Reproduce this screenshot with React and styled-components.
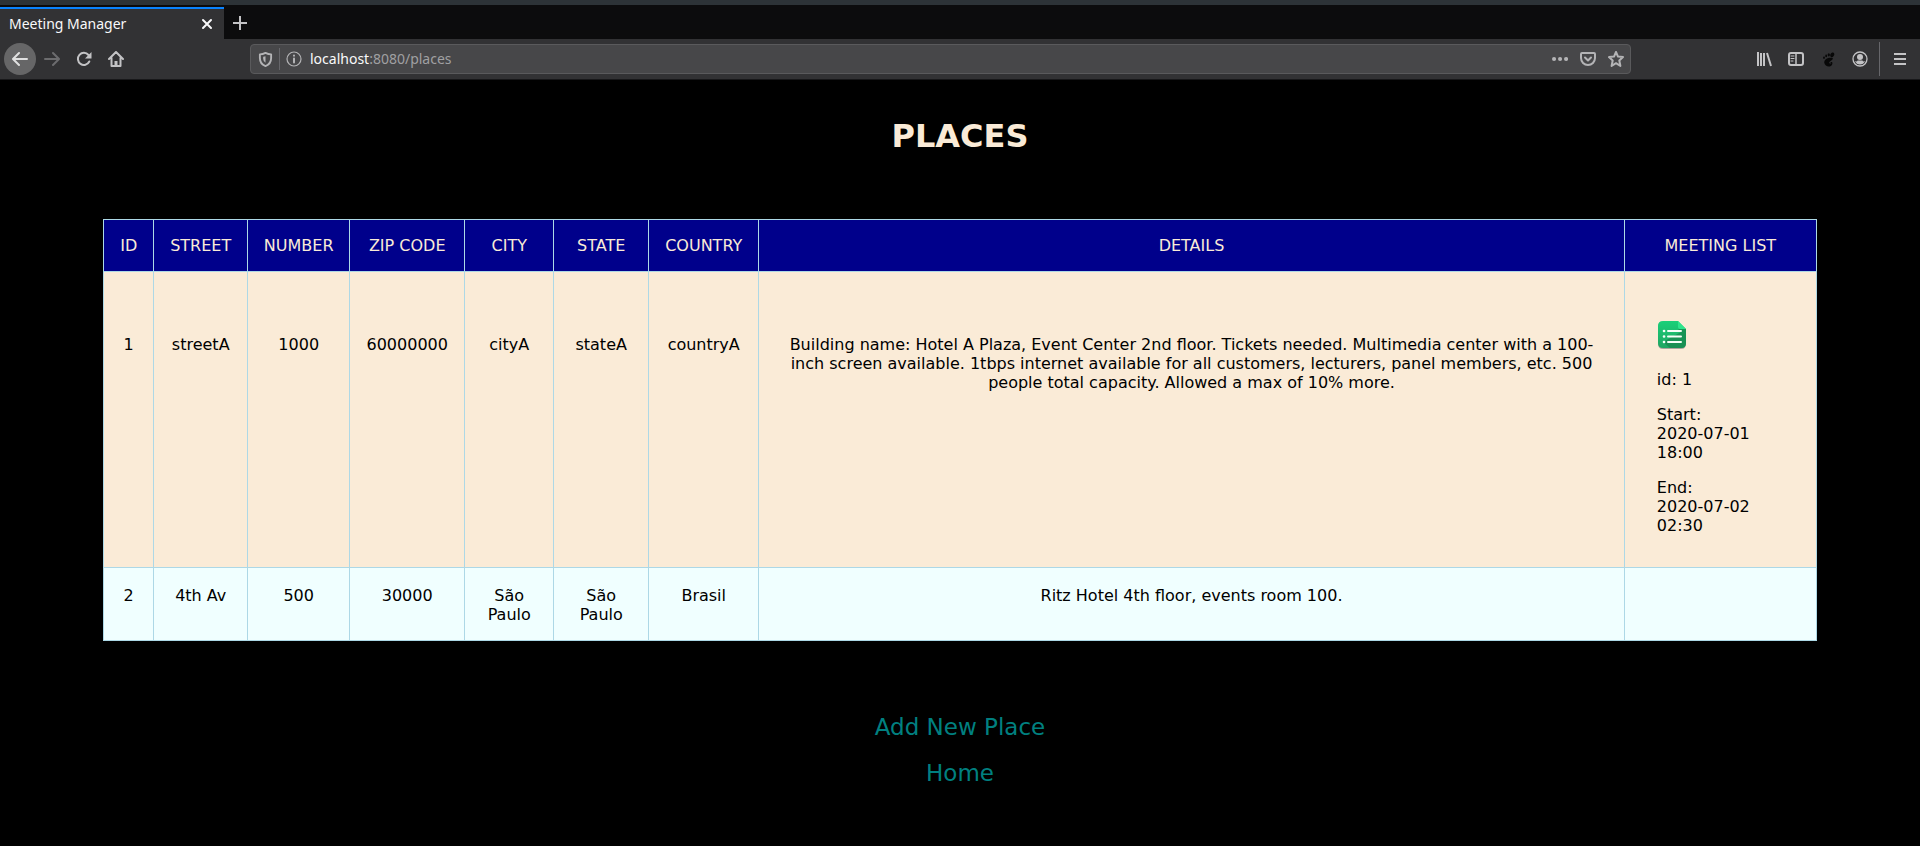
import React from "react";
import styled, { createGlobalStyle } from "styled-components";

const GlobalStyle = createGlobalStyle`
  * { box-sizing: border-box; }
  body { margin: 0; background: #000; font-family: "DejaVu Sans", sans-serif; font-size: 16px; }
`;

const Chrome = styled.header`
  background: #323234;
  border-bottom: 1px solid #18181a;
  font-family: "Noto Sans", sans-serif;
  color: #f9f9fa;
`;

const TabStrip = styled.div`
  display: flex;
  height: 39px;
  padding-top: 7px;
  background: linear-gradient(#2d3337 5px, #0c0c0d 5px);
`;

const Tab = styled.div`
  display: flex;
  align-items: center;
  justify-content: space-between;
  width: 224px;
  padding: 0 8px 0 9px;
  border-top: 2px solid #0a84ff;
  background: #323234;
  font-size: 14px;
  line-height: 20px;
`;

const IconButton = styled.button`
  display: flex;
  align-items: center;
  justify-content: center;
  width: 32px;
  height: 32px;
  padding: 0;
  border: 0;
  border-radius: ${(p) => (p.$round ? "50%" : "2px")};
  background: ${(p) => (p.$round ? "#666667" : "none")};
  color: ${(p) => p.$tone || "#c3c3c5"};
`;

const CloseButton = styled(IconButton)`
  width: 18px;
  height: 18px;
`;

const Toolbar = styled.div`
  display: flex;
  align-items: center;
  height: 40px;
  padding: 0 4px;
`;

const NavGroup = styled.div`
  display: flex;
  width: 246px;
  flex: none;
`;

const AddressBar = styled.div`
  display: flex;
  align-items: center;
  flex: 1;
  height: 30px;
  border: 1px solid #5a5a5c;
  border-radius: 4px;
  background: #474749;
`;

const SmallButton = styled(IconButton)`
  width: 28px;
  height: 28px;
  color: #b4b4b6;
`;

const Separator = styled.span`
  width: 1px;
  height: 22px;
  background: #66666a;
`;

const ToolSeparator = styled(Separator)`
  height: 34px;
  margin: 0 4px 0 3px;
`;

const Address = styled.label`
  display: grid;
  flex: 1;
  align-items: center;
  padding-left: 2px;
  font-size: 14px;
  line-height: 20px;
  color: #a0a0a2;

  & > * { grid-area: 1 / 1; }
  b { font-weight: 400; color: #f9f9fa; }
`;

const AddressInput = styled.input`
  width: 100%;
  padding: 0;
  border: 0;
  outline: 0;
  background: none;
  color: transparent;
  font: inherit;
`;

const ToolGroup = styled.div`
  display: flex;
  align-items: center;
  justify-content: flex-end;
  width: 285px;
  flex: none;
`;

const Page = styled.main`
  display: flex;
  flex-direction: column;
  align-items: center;
  padding: 37px 8px 48px;
`;

const Title = styled.h1`
  margin: 0 0 64px;
  color: antiquewhite;
  font-size: 32px;
  line-height: 38px;
`;

const Table = styled.table`
  width: 90%;
  table-layout: fixed;
  border-collapse: collapse;
  text-align: center;
  line-height: 19px;
`;

const Column = styled.col`
  width: ${(p) => (p.$width ? `${p.$width}px` : "auto")};
`;

const HeadCell = styled.th`
  padding: 16px 0;
  border: 1px solid lightblue;
  background: darkblue;
  color: antiquewhite;
  font-weight: 400;
`;

const Row = styled.tr`
  background: ${(p) => (p.$alternate ? "azure" : "antiquewhite")};
`;

const Cell = styled.td`
  padding: 18px ${(p) => (p.$wide ? 30 : 16)}px 16px;
  border: 1px solid lightblue;
  vertical-align: baseline;
`;

const MeetingCell = styled(Cell)`
  padding: 32px 32px 16px;
  text-align: left;
`;

const MeetingLine = styled.p`
  margin: 16px 0;
`;

const MeetingPart = styled.span`
  display: block;
  white-space: nowrap;
`;

const Links = styled.nav`
  display: flex;
  flex-direction: column;
  align-items: center;
  gap: 18px;
  margin-top: 72px;
`;

const PageLink = styled.a`
  color: teal;
  font-size: 23px;
  line-height: 28px;
  text-decoration: none;
`;

const Icon = ({ size = 16, children }) => (
  <svg width={size} height={size} viewBox="0 0 16 16" fill="none" stroke="currentColor" strokeWidth="2" strokeLinecap="round" strokeLinejoin="round" aria-hidden="true">
    {children}
  </svg>
);

const FormsIcon = () => (
  <svg width="30" height="30" viewBox="0 0 30 30" role="img" aria-label="Meeting">
    <defs>
      <linearGradient id="sheet" x2="0" y2="1">
        <stop stopColor="#1ad079" />
        <stop offset="1" stopColor="#1fa562" />
      </linearGradient>
    </defs>
    <path d="M6 2h15l8 8v14q0 5-5 5H6q-5 0-5-5V7q0-5 5-5Z" fill="#777" opacity=".6" />
    <path d="M6 1h15l8 8v14q0 5-5 5H6q-5 0-5-5V6q0-5 5-5Z" fill="url(#sheet)" />
    <path d="M21 9h8v14q0 5-5 5H13L6 22l18-10Z" fill="#168a50" opacity=".8" />
    <path d="M21 1l8 8h-6q-2 0-2-2Z" fill="#2ee58c" />
    <path d="M11 11h13M11 16.500h13M11 22h13" stroke="#f4fff8" strokeWidth="2" strokeLinecap="round" />
    <path d="M7 11h.1M7 16.500h.1M7 22h.1" stroke="#f4fff8" strokeWidth="2.600" strokeLinecap="round" />
  </svg>
);

const columns = [
  ["ID", 50], ["STREET", 94], ["NUMBER", 102], ["ZIP CODE", 115], ["CITY", 89],
  ["STATE", 95], ["COUNTRY", 110], ["DETAILS", 0], ["MEETING LIST", 192],
];

const places = [
  {
    values: ["1", "streetA", "1000", "60000000", "cityA", "stateA", "countryA"],
    details: (
      <>
        Building name: Hotel A Plaza, Event Center 2nd floor. Tickets needed. Multimedia center with a 100-<wbr />inch
        screen available. 1tbps internet available for all customers, lecturers, panel members, etc. 500 people total
        capacity. Allowed a max of 10% more.
      </>
    ),
    meeting: { id: 1, start: ["2020-07-01", "18:00"], end: ["2020-07-02", "02:30"] },
  },
  {
    values: ["2", "4th Av", "500", "30000", "São Paulo", "São Paulo", "Brasil"],
    details: "Ritz Hotel 4th floor, events room 100.",
  },
];

const MeetingTime = ({ label, time }) => (
  <MeetingLine>
    {[label, ...time].map((part) => <MeetingPart key={part}>{part}</MeetingPart>)}
  </MeetingLine>
);

function BrowserChrome() {
  return (
    <Chrome>
      <TabStrip>
        <Tab>
          Meeting Manager
          <CloseButton aria-label="Close tab" $tone="#f9f9fa">
            <Icon><path d="M4 4l8 8M12 4l-8 8" /></Icon>
          </CloseButton>
        </Tab>
        <IconButton aria-label="New tab">
          <Icon><path d="M8 1v14M1 8h14" strokeLinecap="butt" /></Icon>
        </IconButton>
      </TabStrip>
      <Toolbar>
        <NavGroup>
          <IconButton $round $tone="#e0e0e0" aria-label="Back"><Icon><path d="M15 8H1.500M7 2L1 8l6 6" /></Icon></IconButton>
          <IconButton $tone="#6c6c6e" aria-label="Forward"><Icon><path d="M1 8h13.500M9 2l6 6-6 6" /></Icon></IconButton>
          <IconButton aria-label="Reload">
            <Icon>
              <path d="M13.300 10.500A6 6 0 1 1 12.500 4" />
              <path d="M15.500 1v6.500H9Z" fill="currentColor" stroke="none" />
            </Icon>
          </IconButton>
          <IconButton aria-label="Home page">
            <Icon><path d="M1 8l7-7 7 7M3.500 7v8h9V7" /><path d="M8 15v-5" strokeWidth="3" strokeLinecap="butt" /></Icon>
          </IconButton>
        </NavGroup>
        <AddressBar>
          <SmallButton aria-label="Tracking protection">
            <Icon size={15}><path d="M8 1q3 1.500 6 1.500v4Q14 13 8 15 2 13 2 6.500v-4Q5 2.500 8 1Z" /><path d="M8 4.500v7Q5.500 10 5.500 7V5Z" fill="currentColor" stroke="none" /></Icon>
          </SmallButton>
          <Separator />
          <SmallButton aria-label="Site information">
            <Icon><circle cx="8" cy="8" r="7" strokeWidth="1.200" /><path d="M8 7.500v4M8 4.600v.1" /></Icon>
          </SmallButton>
          <Address>
            <AddressInput aria-label="Address" />
            <span><b>localhost</b>:8080/places</span>
          </Address>
          <SmallButton aria-label="Page actions"><Icon><path d="M2 8h.1M8 8h.1M14 8h.1" strokeWidth="4" /></Icon></SmallButton>
          <SmallButton aria-label="Save to Pocket"><Icon><path d="M2 2h12q1 0 1 1v4a7 7 0 0 1-14 0V3q0-1 1-1ZM5 6.500l3 3 3-3" /></Icon></SmallButton>
          <SmallButton aria-label="Bookmark"><Icon><path d="M8 1l2 4.600 5 .5-3.700 3.400L12.400 15 8 12.200 3.600 15l1.100-5.500L1 6.100l5-.5Z" /></Icon></SmallButton>
        </AddressBar>
        <ToolGroup>
          <IconButton aria-label="Library"><Icon><path d="M2 1v14M5 2v13M8 2v13M11 2l4 13" strokeLinecap="butt" /></Icon></IconButton>
          <IconButton aria-label="Sidebars"><Icon><rect x="1" y="2" width="14" height="12" rx="2" /><path d="M8 2v12" strokeWidth="1.500" /><path d="M3 5h3M3 7.500h3M3 10h2" strokeWidth="1" /></Icon></IconButton>
          <IconButton $tone="#080808" aria-label="GNOME Shell integration">
            <Icon size={15}>
              <g fill="currentColor" stroke="none">
                <ellipse cx="12" cy="3" rx="2" ry="2.600" transform="rotate(25 12 3)" />
                <ellipse cx="8.300" cy="3" rx="1.200" ry="1.800" />
                <ellipse cx="5.500" cy="4.200" rx="1" ry="1.500" />
                <ellipse cx="3.200" cy="6" rx="1" ry="1.300" />
                <path d="M12.500 6.500C8 5 3 8 3.500 11.500S9 17 11.500 14c1.500-2 .5-4-1.500-3 1 1 0 2-1 1-1.500-2 4-3 3.500-5.500Z" />
              </g>
            </Icon>
          </IconButton>
          <IconButton aria-label="Account">
            <Icon><circle cx="8" cy="8" r="7" strokeWidth="1.300" /><g fill="currentColor" stroke="none"><circle cx="8" cy="6" r="3" /><path d="M3 10q2 1 2.500-.5h5Q11 11 13 10q-1.500 3.500-5 3.500T3 10Z" /></g></Icon>
          </IconButton>
          <ToolSeparator />
          <IconButton aria-label="Open menu"><Icon><path d="M2 3h12M2 8h12M2 13h12" strokeLinecap="butt" /></Icon></IconButton>
        </ToolGroup>
      </Toolbar>
    </Chrome>
  );
}

export default function App() {
  return (
    <>
      <GlobalStyle />
      <BrowserChrome />
      <Page>
        <Title>PLACES</Title>
        <Table>
          <colgroup>
            {columns.map(([name, width]) => <Column key={name} $width={width} />)}
          </colgroup>
          <thead>
            <tr>{columns.map(([name]) => <HeadCell key={name} scope="col">{name}</HeadCell>)}</tr>
          </thead>
          <tbody>
            {places.map(({ values, details, meeting }, index) => (
              <Row key={values[0]} $alternate={index % 2 === 1}>
                {values.map((value, i) => <Cell key={i}>{value}</Cell>)}
                <Cell $wide>{details}</Cell>
                <MeetingCell>
                  {meeting && (
                    <>
                      <MeetingLine><FormsIcon /></MeetingLine>
                      <MeetingLine>id: {meeting.id}</MeetingLine>
                      <MeetingTime label="Start:" time={meeting.start} />
                      <MeetingTime label="End:" time={meeting.end} />
                    </>
                  )}
                </MeetingCell>
              </Row>
            ))}
          </tbody>
        </Table>
        <Links>
          <PageLink href="#new">Add New Place</PageLink>
          <PageLink href="#home">Home</PageLink>
        </Links>
      </Page>
    </>
  );
}
